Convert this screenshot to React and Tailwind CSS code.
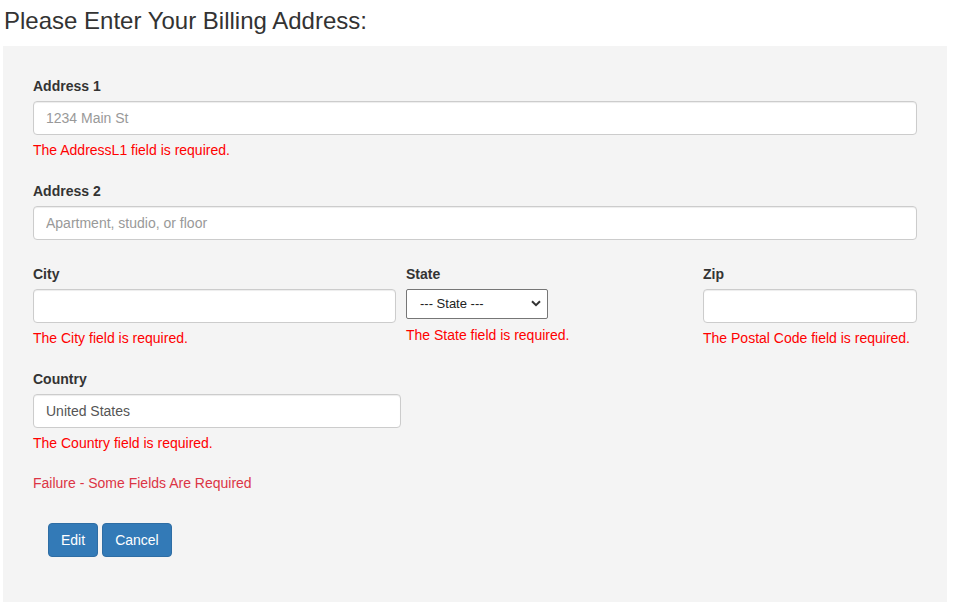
import React from "react";

function Label({ children }) {
  return (
    <div className="text-[14px] leading-[20px] font-bold text-[#333] mb-[5px]">{children}</div>
  );
}

function Input({ placeholder, value, className = "" }) {
  return (
    <input
      type="text"
      placeholder={placeholder}
      defaultValue={value}
      className={
        "block h-[34px] px-[12px] py-[6px] text-[14px] leading-[20px] text-[#555] placeholder:text-[#999] bg-white border border-[#ccc] rounded-[4px] shadow-[inset_0_1px_1px_rgba(0,0,0,0.075)] outline-none " +
        className
      }
    />
  );
}

function Err({ children, className = "" }) {
  return (
    <div className={"text-[14px] leading-[20px] text-[#ff0000] " + className}>{children}</div>
  );
}

export default function App() {
  return (
    <div className="w-[957px] min-h-[615px] bg-white font-['Liberation_Sans',Arial,sans-serif] text-[#333]">
      <h3 className="h-[46px] pl-[4px] pt-[8px] text-[24px] leading-[26px] font-normal text-[#333]">
        Please Enter Your Billing Address:
      </h3>
      <div className="ml-[3px] w-[944px] bg-[#f4f4f4] px-[30px] pt-[30px] pb-[45px]">
        <Label>Address 1</Label>
        <Input placeholder="1234 Main St" className="w-full" />
        <Err className="mt-[5px]">The AddressL1 field is required.</Err>

        <div className="mt-[21px]">
          <Label>Address 2</Label>
          <Input placeholder="Apartment, studio, or floor" className="w-full" />
        </div>

        <div className="mt-[24px] flex">
          <div className="w-[363px]">
            <Label>City</Label>
            <Input className="w-full" />
            <Err className="mt-[5px]">The City field is required.</Err>
          </div>
          <div className="ml-[10px] flex-1">
            <Label>State</Label>
            <div className="relative w-[142px] h-[30px]">
              <select
                defaultValue=""
                className="appearance-none block w-[142px] h-[30px] pl-[13px] pr-[24px] text-[13px] text-[#222] bg-white border border-[#767676] rounded-[2px] outline-none"
              >
                <option value="">--- State ---</option>
              </select>
              <svg
                className="absolute right-[7px] top-[11px] pointer-events-none"
                width="10"
                height="7"
                viewBox="0 0 10 7"
              >
                <path d="M1 1.2 L5 5.2 L9 1.2" fill="none" stroke="#333" strokeWidth="2" />
              </svg>
            </div>
            <Err className="mt-[6px]">The State field is required.</Err>
          </div>
          <div className="w-[214px]">
            <Label>Zip</Label>
            <Input className="w-full" />
            <Err className="mt-[5px]">The Postal Code field is required.</Err>
          </div>
        </div>

        <div className="mt-[21px]">
          <Label>Country</Label>
          <Input value="United States" className="w-[368px]" />
          <Err className="mt-[5px]">The Country field is required.</Err>
        </div>

        <div className="mt-[20px] text-[14px] leading-[20px] text-[#dc3545]">
          Failure - Some Fields Are Required
        </div>

        <div className="mt-[30px] ml-[15px] flex gap-[4px]">
          <button className="h-[34px] px-[12px] text-[14px] leading-[20px] text-white bg-[#337ab7] border border-[#2e6da4] rounded-[4px]">
            Edit
          </button>
          <button className="h-[34px] px-[12px] text-[14px] leading-[20px] text-white bg-[#337ab7] border border-[#2e6da4] rounded-[4px]">
            Cancel
          </button>
        </div>
      </div>
    </div>
  );
}
